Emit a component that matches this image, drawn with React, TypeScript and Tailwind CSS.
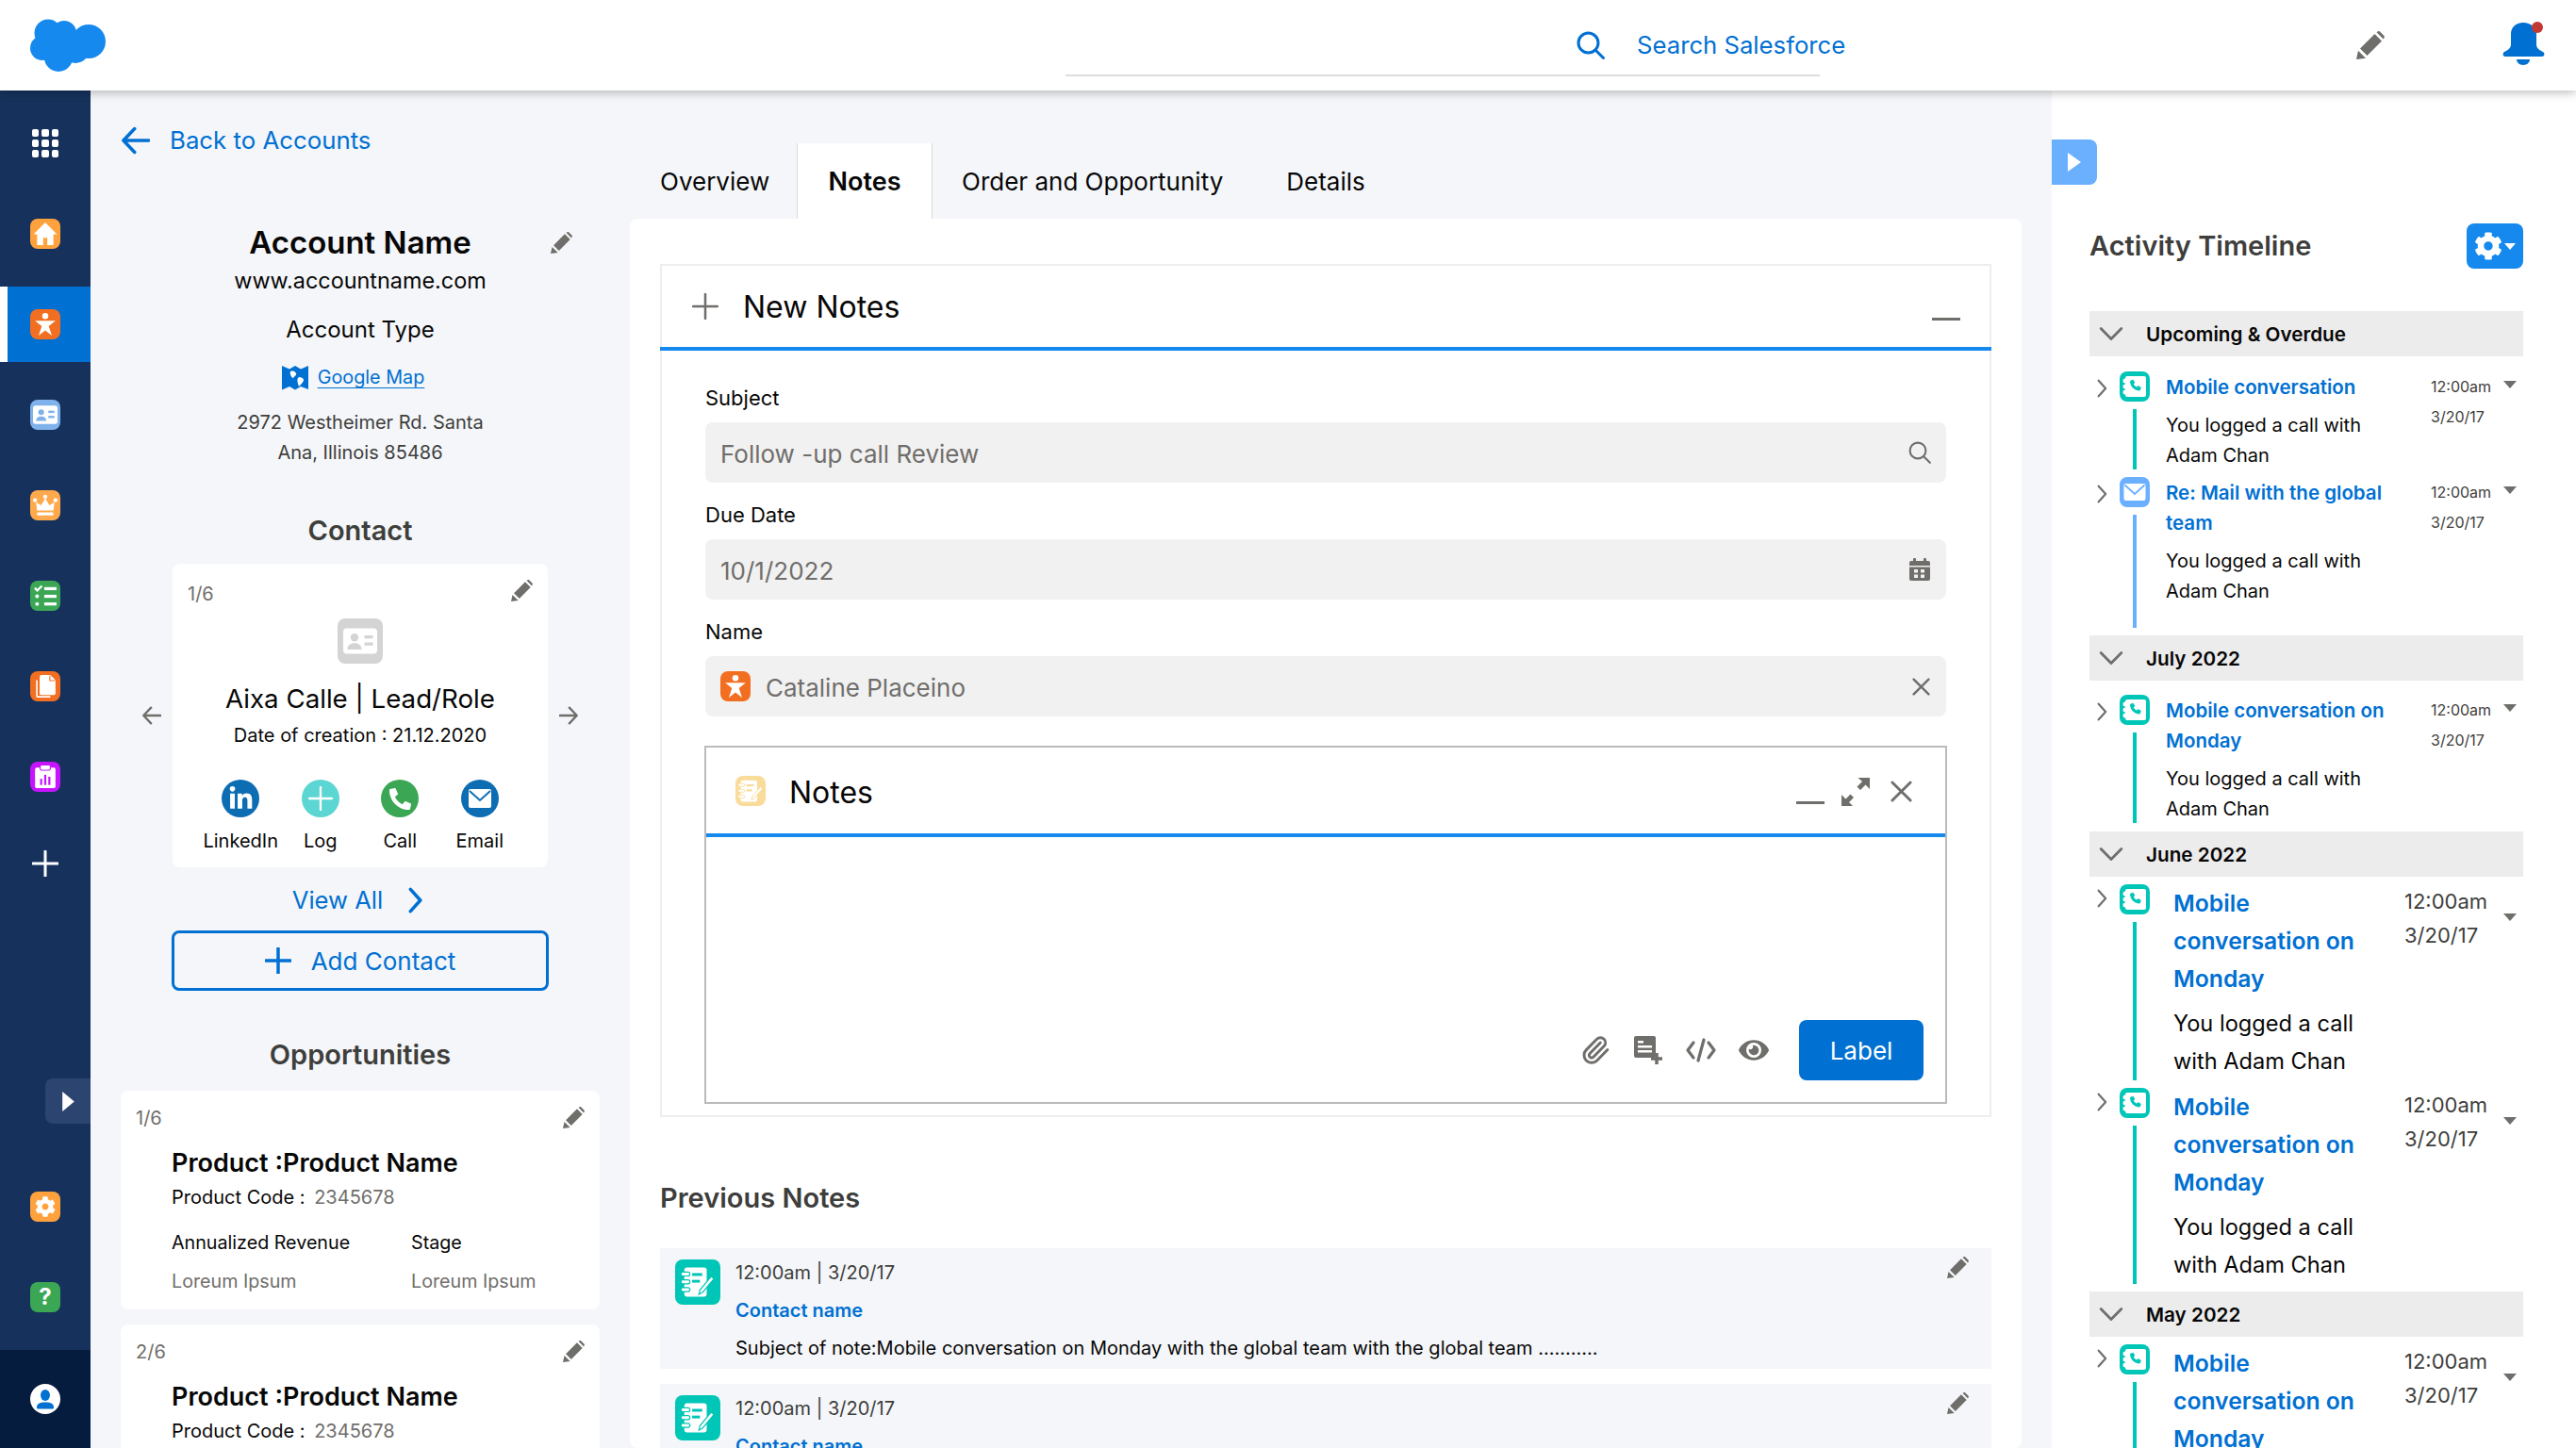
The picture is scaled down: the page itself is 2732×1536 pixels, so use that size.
import React from "react";
import { FaLinkedinIn, FaPhoneAlt, FaCog, FaEye } from "react-icons/fa";
import { Paperclip } from "lucide-react";

const GRAY = "#706e6b";

function Pencil({ size = 23, color = GRAY }: { size?: number; color?: string }) {
  return (
    <svg width={size} height={size} viewBox="0 0 24 24" fill={color} className="shrink-0">
      <path d="M0 24l1.6-7.4L8 23l-8 1zM3.2 14.8L15.6 2.4l6 6L9.2 20.8l-6-6zM17.2 0.9l1.2-0.7c.6-.3 1.3-.2 1.8.3l3.2 3.2c.5.5.6 1.2.3 1.8l-.7 1.2-5.8-5.8z" />
    </svg>
  );
}

function Logo() {
  return (
    <svg width="80" height="56" viewBox="0 0 80 56" fill="#1589ee">
      <circle cx="19" cy="15" r="14.5" />
      <circle cx="36" cy="15" r="13" />
      <circle cx="62" cy="24" r="18" />
      <circle cx="13" cy="31" r="13" />
      <circle cx="30" cy="41" r="15" />
      <circle cx="48" cy="32" r="15" />
      <circle cx="34" cy="26" r="18" />
    </svg>
  );
}

function Square({ bg, children, cls = "w-8 h-8" }: { bg: string; children: React.ReactNode; cls?: string }) {
  return (
    <div className={`${cls} rounded-lg flex items-center justify-center shrink-0`} style={{ background: bg }}>
      {children}
    </div>
  );
}

function PersonStar({ size = 26 }: { size?: number }) {
  return (
    <svg width={size} height={size} viewBox="0 0 24 24" fill="#fff">
      <circle cx="12" cy="4" r="3" />
      <path d="M2 8.5h20l-6.6 5.4L18.5 23 12 18l-6.5 5 3.1-9.1z" />
    </svg>
  );
}

function HomeGlyph() {
  return (
    <svg width="26" height="26" viewBox="0 0 24 24" fill="#fff">
      <path d="M12 1L0.5 12.5H4V23h6v-7h4v7h6V12.5h3.5z" />
    </svg>
  );
}

function CardGlyph({ color, size = 26 }: { color: string; size?: number }) {
  return (
    <svg width={size} height={size} viewBox="0 0 24 24">
      <rect x="0" y="3" width="24" height="18" rx="2.5" fill="#fff" />
      <circle cx="8" cy="9.5" r="2.8" fill={color} />
      <path d="M3 18c0-3 2-4.5 5-4.5s5 1.500 5 4.500z" fill={color} />
      <rect x="15" y="8" width="6" height="2.200" fill={color} />
      <rect x="15" y="13" width="6" height="2.200" fill={color} />
    </svg>
  );
}

function CrownGlyph() {
  return (
    <svg width="26" height="26" viewBox="0 0 24 24" fill="#fff">
      <circle cx="12" cy="3.500" r="2" />
      <circle cx="2" cy="7" r="2" />
      <circle cx="22" cy="7" r="2" />
      <path d="M3 9l5 3 4-7 4 7 5-3-1 8H4z" />
      <rect x="4" y="19" width="16" height="3" rx="1" />
    </svg>
  );
}

function TaskGlyph() {
  return (
    <svg width="26" height="26" viewBox="0 0 24 24" fill="#fff">
      <path d="M1 5l1.500-1.500 1.700 1.700L8 1.500 9.500 3 4.200 8.300z" />
      <rect x="11" y="3.500" width="12" height="3" />
      <rect x="11" y="11" width="12" height="3" />
      <rect x="11" y="18.500" width="12" height="3" />
      <circle cx="4" cy="12.500" r="1.800" />
      <circle cx="4" cy="20" r="1.800" />
    </svg>
  );
}

function FilesGlyph() {
  return (
    <svg width="26" height="26" viewBox="0 0 24 24" fill="#fff">
      <path d="M8 1h9l5 5v13a1.500 1.500 0 0 1-1.500 1.500H8A1.500 1.500 0 0 1 6.500 19V2.500A1.500 1.500 0 0 1 8 1z" />
      <path d="M3 6h1.500v15.500H17V23H4.500A1.500 1.500 0 0 1 3 21.500z" />
      <path d="M16.500 1.500v5h5" fill="none" stroke="#f26f21" strokeWidth="1" />
    </svg>
  );
}

function ClipGlyph() {
  return (
    <svg width="26" height="26" viewBox="0 0 24 24">
      <rect x="2" y="3" width="20" height="20" rx="1.500" fill="#fff" />
      <rect x="7" y="0.500" width="10" height="5" rx="1.500" fill="#fff" stroke="#c614ff" strokeWidth="1" />
      <rect x="7" y="14" width="2" height="6" fill="#c614ff" />
      <rect x="11" y="10" width="2" height="10" fill="#c614ff" />
      <rect x="15" y="12" width="2" height="8" fill="#c614ff" />
    </svg>
  );
}

function NoteGlyph({ color, size = 32 }: { color: string; size?: number }) {
  return (
    <svg width={size} height={size} viewBox="0 0 32 32">
      <rect x="4" y="3" width="20" height="26" rx="2.500" fill="#fff" />
      <rect x="1" y="7" width="8" height="3.500" rx="1.700" fill="#fff" stroke={color} strokeWidth="1" />
      <rect x="1" y="14" width="8" height="3.500" rx="1.700" fill="#fff" stroke={color} strokeWidth="1" />
      <rect x="1" y="21" width="8" height="3.500" rx="1.700" fill="#fff" stroke={color} strokeWidth="1" />
      <rect x="11" y="8" width="9" height="2.500" fill={color} />
      <rect x="11" y="14" width="7" height="2.500" fill={color} />
      <path d="M17 27l1-4 10-12 2.500 2-10 12z" fill="#fff" stroke={color} strokeWidth="1" />
    </svg>
  );
}

function CallIcon() {
  return (
    <div className="w-8 h-8 rounded-lg bg-[#00c6b7] flex items-center justify-center shrink-0">
      <svg width="32" height="32" viewBox="0 0 32 32">
        <rect x="6" y="5" width="22" height="22" rx="2" fill="#fff" />
        <circle cx="6" cy="10" r="2.500" fill="#fff" />
        <circle cx="6" cy="16" r="2.500" fill="#fff" />
        <circle cx="6" cy="22" r="2.500" fill="#fff" />
        <path
          d="M12 9.500l2.500-.8 1.800 3.200-1.500 1.300c.6 1.600 1.800 2.800 3.400 3.400l1.400-1.500 3.200 1.800-.8 2.500c-.3.700-1 1.100-1.700 1-5-.7-8.600-4.300-9.300-9.200-.1-.7.300-1.400 1-1.700z"
          fill="#00c6b7"
        />
      </svg>
    </div>
  );
}

function MailIcon() {
  return (
    <div className="w-8 h-8 rounded-lg bg-[#6bb0ff] flex items-center justify-center shrink-0">
      <svg width="24" height="20" viewBox="0 0 24 20">
        <rect x="0.500" y="1" width="23" height="18" rx="2" fill="#fff" />
        <path d="M1.500 2.500L12 12 22.500 2.500" fill="none" stroke="#6bb0ff" strokeWidth="1.800" />
      </svg>
    </div>
  );
}

function Chevron({ dir, size, color = GRAY, w = 2.600 }: { dir: "right" | "down"; size: number; color?: string; w?: number }) {
  return (
    <svg width={size} height={size} viewBox="0 0 24 24" fill="none" stroke={color} strokeWidth={w} strokeLinecap="round" strokeLinejoin="round" className="shrink-0">
      <path d={dir === "right" ? "M8 2l9 10-9 10" : "M2 7l10 10L22 7"} />
    </svg>
  );
}

function Caret({ w = 14, h = 8, color = GRAY }: { w?: number; h?: number; color?: string }) {
  return (
    <svg width={w} height={h} viewBox="0 0 14 8" className="shrink-0">
      <path d="M0 0h14L7 8z" fill={color} />
    </svg>
  );
}

function Arrow({ dir, size, color, w }: { dir: "l" | "r"; size: number; color: string; w: number }) {
  return (
    <svg width={size} height={size} viewBox="0 0 24 24" fill="none" stroke={color} strokeWidth={w} strokeLinecap="round" strokeLinejoin="round" className="shrink-0">
      <path d={dir === "l" ? "M23 12H2M11 2L1.500 12 11 22" : "M1 12h21M13 2l9.500 10L13 22"} />
    </svg>
  );
}

function Plus({ size, color, w = 2 }: { size: number; color: string; w?: number }) {
  return (
    <svg width={size} height={size} viewBox="0 0 28 28" fill="none" stroke={color} strokeWidth={w} strokeLinecap="round" className="shrink-0">
      <path d="M14 1v26M1 14h26" />
    </svg>
  );
}

function Cross({ size = 23 }: { size?: number }) {
  return (
    <svg width={size} height={size} viewBox="0 0 24 24" fill="none" stroke={GRAY} strokeWidth="3" strokeLinecap="round" className="shrink-0">
      <path d="M2 2l20 20M22 2L2 22" />
    </svg>
  );
}

function Search({ size, color, w }: { size: number; color: string; w: number }) {
  return (
    <svg width={size} height={size} viewBox="0 0 30 30" fill="none" stroke={color} strokeWidth={w} strokeLinecap="round" className="shrink-0">
      <circle cx="12.500" cy="12.500" r="10.500" />
      <path d="M20 20l8.500 8.500" />
    </svg>
  );
}

function SideItem({ children, active }: { children: React.ReactNode; active?: boolean }) {
  return (
    <div className="h-24 flex items-center justify-center">
      {active ? (
        <div className="h-20 w-full bg-[#0070d2] shadow-[inset_8px_0_0_#fff] flex items-center justify-center">{children}</div>
      ) : (
        children
      )}
    </div>
  );
}

function Sidebar() {
  return (
    <aside className="w-24 shrink-0 bg-[#16325c] flex flex-col pt-2">
      <SideItem>
        <div className="grid grid-cols-3 gap-[3px] w-7">
          {Array.from({ length: 9 }).map((_, i) => (
            <div key={i} className="h-2 bg-white rounded-[2px]" />
          ))}
        </div>
      </SideItem>
      <SideItem>
        <Square bg="#ffa23e"><HomeGlyph /></Square>
      </SideItem>
      <SideItem active>
        <Square bg="#f26f21"><PersonStar /></Square>
      </SideItem>
      <SideItem>
        <Square bg="#7fb2ea"><CardGlyph color="#7fb2ea" /></Square>
      </SideItem>
      <SideItem>
        <Square bg="#ffa94d"><CrownGlyph /></Square>
      </SideItem>
      <SideItem>
        <Square bg="#3ba755"><TaskGlyph /></Square>
      </SideItem>
      <SideItem>
        <Square bg="#f26f21"><FilesGlyph /></Square>
      </SideItem>
      <SideItem>
        <Square bg="#c614ff"><ClipGlyph /></Square>
      </SideItem>
      <div className="h-[88px] flex items-center justify-center">
        <Plus size={28} color="#fff" w={3} />
      </div>
      <div className="mt-[184px] self-end w-12 h-12 bg-[#2b4470] rounded-l-lg flex items-center justify-center">
        <svg width="13" height="21" viewBox="0 0 12 20"><path d="M0 0l12 10L0 20z" fill="#fff" /></svg>
      </div>
      <div className="mt-[72px] flex justify-center">
        <Square bg="#ffa23e"><FaCog size={22} color="#fff" /></Square>
      </div>
      <div className="mt-16 flex justify-center">
        <Square bg="#3ba755"><span className="text-white text-[24px] font-bold leading-none">?</span></Square>
      </div>
      <div className="mt-10 h-[104px] bg-[#061c3f] flex items-center justify-center">
        <div className="w-8 h-8 rounded-full bg-white flex items-center justify-center">
          <svg width="22" height="22" viewBox="0 0 22 22" fill="#0070d2">
            <ellipse cx="11" cy="7" rx="5" ry="6" />
            <path d="M2 20c0-4 3-5.500 9-5.500s9 1.500 9 5.500c0 1-.5 1.500-1.500 1.500h-15C2.500 21.500 2 21 2 20z" />
          </svg>
        </div>
      </div>
    </aside>
  );
}

function ContactAction({ bg, label, children }: { bg: string; label: string; children: React.ReactNode }) {
  return (
    <div className="flex flex-col items-center">
      <div className="w-10 h-10 rounded-full flex items-center justify-center" style={{ background: bg }}>{children}</div>
      <div className="mt-[11px] h-7 leading-7 text-[20px] text-[#080707]">{label}</div>
    </div>
  );
}

function OppCard({ n, extra }: { n: string; extra?: boolean }) {
  return (
    <div className={`w-[508px] bg-white rounded-lg shrink-0 px-4 pt-[17px] ${extra ? "h-[232px] mt-4" : "h-[232px] mt-[18px]"}`}>
      <div className="flex justify-between items-start h-[23px]">
        <span className="text-[20px] leading-6 text-[#706e6b]">{n}</span>
        <Pencil />
      </div>
      <div className="pl-[38px]">
        <div className="mt-[19px] h-9 leading-9 text-[27px] font-semibold text-[#080707]">Product :Product Name</div>
        <div className="mt-[2px] h-8 leading-8 text-[20px] text-[#080707]">
          Product Code : <span className="text-[#706e6b] ml-1">2345678</span>
        </div>
        <div className="mt-4 grid grid-cols-[254px_1fr] text-[19.7px]">
          <div className="h-8 leading-8 text-[#080707]">Annualized Revenue</div>
          <div className="h-8 leading-8 text-[#080707]">Stage</div>
          <div className="mt-[9px] h-8 leading-8 text-[#706e6b]">Loreum Ipsum</div>
          <div className="mt-[9px] h-8 leading-8 text-[#706e6b]">Loreum Ipsum</div>
        </div>
      </div>
    </div>
  );
}

function LeftColumn() {
  return (
    <section className="w-[572px] shrink-0 flex flex-col items-center overflow-hidden">
      <div className="self-start ml-[33px] mt-[37px] h-8 flex items-center">
        <Arrow dir="l" size={30} color="#0070d2" w={2.800} />
        <span className="ml-[21px] text-[25.8px] text-[#0070d2] leading-8">Back to Accounts</span>
      </div>
      <div className="mt-[72px] h-10 w-full grid grid-cols-[1fr_auto_1fr] items-center">
        <div />
        <div className="text-[33px] font-semibold text-[#080707] leading-10">Account Name</div>
        <div className="justify-self-end mr-[61px]"><Pencil /></div>
      </div>
      <div className="mt-[5px] h-8 leading-8 text-[23.4px] text-[#080707]">www.accountname.com</div>
      <div className="mt-5 h-8 leading-8 text-[24px] text-[#080707]">Account Type</div>
      <div className="mt-5 mr-4 h-8 flex items-center">
        <svg width="30" height="30" viewBox="0 0 30 30" className="shrink-0">
          <path d="M1 2l8 3.500L15 2l6 3.500L29 2v25l-8-3-6 3.500L9 24l-8 3.500z" fill="#0070d2" />
          <path d="M10 8c3-1 5 0 6 2s-2 3-3 5c-2 0-4-5-3-7zM19 14c2 0 5 1 5 3s-3 5-5 7c-1-3-3-8 0-10z" fill="#fff" />
        </svg>
        <span className="ml-[9px] text-[19.8px] text-[#0070d2] underline underline-offset-4">Google Map</span>
      </div>
      <div className="mt-4 text-center text-[20px] leading-8 text-[#3e3e3c]">
        2972 Westheimer Rd. Santa
        <br />
        Ana, Illinois 85486
      </div>
      <div className="mt-[47px] h-10 leading-10 text-[29px] font-semibold text-[#3e3e3c]">Contact</div>
      <div className="mt-[15px] flex items-center gap-[12px]">
        <Arrow dir="l" size={20} color={GRAY} w={2.800} />
        <div className="w-[398px] h-[322px] bg-white rounded-lg flex flex-col">
          <div className="flex justify-between items-start px-4 pt-[17px] h-10">
            <span className="text-[20px] leading-6 text-[#706e6b] pt-[3px]">1/6</span>
            <Pencil />
          </div>
          <div className="self-center mt-[18px] w-12 h-12 rounded-lg bg-[#d4d4d4] flex items-center justify-center">
            <CardGlyph color="#d4d4d4" size={36} />
          </div>
          <div className="mt-[17px] h-10 leading-10 text-center text-[27.7px] text-[#080707]">Aixa Calle | Lead/Role</div>
          <div className="mt-[3px] h-8 leading-8 text-center text-[20px] text-[#080707]">Date of creation : 21.12.2020</div>
          <div className="mt-[31px] px-[30px] grid grid-cols-4">
            <ContactAction bg="#0d6db2" label="LinkedIn"><FaLinkedinIn size={27} color="#fff" /></ContactAction>
            <ContactAction bg="#5bd6d2" label="Log"><Plus size={26} color="#fff" w={2.500} /></ContactAction>
            <ContactAction bg="#3ba755" label="Call"><FaPhoneAlt size={23} color="#fff" /></ContactAction>
            <ContactAction bg="#0d6db2" label="Email">
              <svg width="24" height="20" viewBox="0 0 24 20">
                <rect x="0" y="0" width="24" height="20" rx="2" fill="#fff" />
                <path d="M1 2l11 10L23 2" fill="none" stroke="#0d6db2" strokeWidth="2" />
              </svg>
            </ContactAction>
          </div>
        </div>
        <Arrow dir="r" size={20} color={GRAY} w={2.800} />
      </div>
      <div className="mt-4 h-10 flex items-center">
        <span className="text-[25.6px] text-[#0070d2]">View All</span>
        <span className="ml-[20px]"><Chevron dir="right" size={28} color="#0070d2" w={3} /></span>
      </div>
      <div className="mt-[13px] w-[400px] h-16 shrink-0 border-[3px] border-[#0070d2] rounded-lg flex items-center justify-center">
        <Plus size={28} color="#0070d2" w={3.500} />
        <span className="ml-[21px] text-[26px] text-[#0070d2]">Add Contact</span>
      </div>
      <div className="mt-12 h-10 leading-10 text-[29px] font-semibold text-[#3e3e3c] shrink-0">Opportunities</div>
      <OppCard n="1/6" />
      <OppCard n="2/6" extra />
    </section>
  );
}

function Field({ label, value, icon, first, leading }: { label: string; value: string; icon: React.ReactNode; first?: boolean; leading?: React.ReactNode }) {
  return (
    <>
      <div className={`${first ? "mt-[34px]" : "mt-[18px]"} h-8 leading-8 text-[22px] text-[#080707]`}>{label}</div>
      <div className="mt-[10px] h-16 rounded-lg bg-[#f1f1f1] flex items-center pl-4 pr-[16px]">
        {leading}
        <span className="text-[26px] text-[#706e6b] flex-1 pt-[2px]">{value}</span>
        {icon}
      </div>
    </>
  );
}

function NoteRow({ extra }: { extra?: boolean }) {
  return (
    <div className={`h-[128px] shrink-0 bg-[#f4f6f9] flex pl-4 pr-6 pt-3 ${extra ? "mt-4" : "mt-[33px]"}`}>
      <Square bg="#00c6b7" cls="w-12 h-12"><NoteGlyph color="#00c6b7" size={38} /></Square>
      <div className="ml-4 flex-1">
        <div className="h-7 leading-7 text-[20px] text-[#3e3e3c]">12:00am | 3/20/17</div>
        <div className="mt-[10px] h-8 leading-8 text-[20px] font-semibold text-[#0070d2]">Contact name</div>
        <div className="mt-2 h-8 leading-8 text-[20px] text-[#080707]">
          Subject of note:Mobile conversation on Monday with the global team with the global team ...........
        </div>
      </div>
      <div className="-mt-[3px]"><Pencil /></div>
    </div>
  );
}

function CenterColumn() {
  return (
    <section className="w-[1476px] shrink-0 flex flex-col pt-14">
      <div className="h-20 shrink-0 flex items-stretch text-[26px] text-[#080707]">
        <div className="ml-8 flex items-center w-[113px]">Overview</div>
        <div className="ml-8 w-[144px] bg-white border-x border-[#dddbda] flex items-center justify-center font-semibold text-[27px] pt-[2px]">Notes</div>
        <div className="ml-[31px] flex items-center whitespace-nowrap">Order and Opportunity</div>
        <div className="ml-[67px] flex items-center">Details</div>
      </div>
      <div className="flex-1 min-h-0 bg-white rounded-lg px-8 pt-12 flex flex-col overflow-hidden">
        <div className="h-[905px] shrink-0 border-2 border-[#eeeeee] flex flex-col">
          <div className="h-[90px] shrink-0 -mx-[2px] border-b-4 border-[#1589ee] flex items-center pl-[34px] pr-[33px]">
            <Plus size={28} color={GRAY} w={2.500} />
            <span className="ml-[26px] text-[32px] text-[#080707] flex-1 leading-10 pt-[1px]">New Notes</span>
            <div className="w-[30px] h-[3px] bg-[#706e6b] mt-[26px]" />
          </div>
          <div className="px-[46px] flex flex-col flex-1">
            <Field first label="Subject" value="Follow -up call Review" icon={<Search size={24} color={GRAY} w={2.600} />} />
            <Field
              label="Due Date"
              value="10/1/2022"
              icon={
                <svg width="22" height="24" viewBox="0 0 22 24" fill={GRAY} className="mx-[1px]">
                  <rect x="0" y="3" width="22" height="21" rx="2" />
                  <rect x="4" y="0" width="3" height="5" rx="1" />
                  <rect x="15" y="0" width="3" height="5" rx="1" />
                  <rect x="0" y="8" width="22" height="1.500" fill="#f1f1f1" />
                  <rect x="5" y="12" width="4" height="3.500" fill="#f1f1f1" />
                  <rect x="12" y="12" width="4" height="3.500" fill="#f1f1f1" />
                  <rect x="5" y="17.500" width="4" height="3.500" fill="#f1f1f1" />
                  <rect x="12" y="17.500" width="4" height="3.500" fill="#f1f1f1" />
                </svg>
              }
            />
            <Field
              label="Name"
              value="Cataline Placeino"
              icon={<span className="mr-[1px]"><Cross size={19} /></span>}
              leading={<div className="mr-[16px]"><Square bg="#f26f21"><PersonStar /></Square></div>}
            />
            <div className="mt-[31px] -mx-[1px] h-[380px] shrink-0 border-2 border-[#bbbbbb] flex flex-col">
              <div className="h-[95px] shrink-0 border-b-4 border-[#1589ee] flex items-center pl-[31px] pr-[35px]">
                <Square bg="#f9dc9a"><NoteGlyph color="#f9dc9a" size={28} /></Square>
                <span className="ml-[25px] text-[32px] text-[#080707] flex-1 leading-10 pt-1">Notes</span>
                <div className="w-[30px] h-[3px] bg-[#706e6b] mt-[26px]" />
                <svg width="30" height="30" viewBox="0 0 30 30" fill={GRAY} className="ml-[18px] mt-[2px]">
                  <path d="M0 30V18l4.500 4.500 5-5 3.500 3.500-5 5L12 30zM30 0v12l-4.500-4.500-5.500 5.500-3.500-3.500L22 4 17.500 0z" />
                </svg>
                <span className="ml-[22px] mt-[2px]"><Cross size={23} /></span>
              </div>
              <div className="flex-1 flex items-end justify-end pb-[23px] pr-[23px]">
                <div className="h-16 flex items-center">
                  <Paperclip size={32} color={GRAY} strokeWidth={2.200} />
                  <svg width="30" height="30" viewBox="0 0 30 30" className="ml-[25px]">
                    <rect x="0" y="0" width="23" height="23" rx="2" fill={GRAY} />
                    <rect x="4" y="5" width="6" height="2.500" fill="#fff" />
                    <rect x="4" y="10" width="15" height="2.500" fill="#fff" />
                    <rect x="4" y="15" width="15" height="2.500" fill="#fff" />
                    <path d="M24 18v12M18 24h12" stroke={GRAY} strokeWidth="3.500" />
                  </svg>
                  <svg width="32" height="26" viewBox="0 0 32 26" fill="none" stroke={GRAY} strokeWidth="3.200" strokeLinecap="round" strokeLinejoin="round" className="ml-[25px]">
                    <path d="M8 5L2 13l6 8M24 5l6 8-6 8M19 2l-6 22" />
                  </svg>
                  <span className="ml-[24px]"><FaEye size={32} color={GRAY} /></span>
                  <button className="ml-[32px] w-[132px] h-16 rounded-lg bg-[#0070d2] text-white text-[26px]">Label</button>
                </div>
              </div>
            </div>
          </div>
        </div>
        <div className="mt-[66px] h-10 leading-10 shrink-0 text-[29px] font-semibold text-[#3e3e3c]">Previous Notes</div>
        <NoteRow />
        <NoteRow extra />
      </div>
    </section>
  );
}

function SectionBar({ title }: { title: string }) {
  return (
    <div className="h-12 bg-[#ececec] flex items-center pl-[10px] shrink-0">
      <Chevron dir="down" size={26} />
      <span className="ml-[24px] text-[20.7px] font-semibold text-[#080707] pt-[2px]">{title}</span>
    </div>
  );
}

type ItemProps = { large?: boolean; mail?: boolean; title: string[]; body: string[]; h: number };

function Item({ large, mail, title, body, h }: ItemProps) {
  return (
    <div className="flex items-stretch shrink-0" style={{ height: h }}>
      <div className={`w-[32px] pl-[3px] ${large ? "pt-[5px]" : "pt-[8px]"}`}>
        <Chevron dir="right" size={20} />
      </div>
      <div className="w-8 flex flex-col items-center shrink-0">
        {mail ? <MailIcon /> : <CallIcon />}
        <div className={`mt-2 w-1 flex-1 ${mail ? "bg-[#6bb0ff]" : "bg-[#00c6b7]"}`} />
      </div>
      <div className={`${large ? "ml-[25px] w-[245px]" : "ml-[17px] w-[281px] pt-[1px]"}`}>
        {title.map((t) => (
          <div key={t} className={`${large ? "text-[24.7px] leading-10" : "text-[20.5px] leading-8"} font-semibold text-[#0070d2] whitespace-nowrap`}>{t}</div>
        ))}
        <div className="mt-2">
          {body.map((t) => (
            <div key={t} className={`${large ? "text-[23.6px] leading-10" : "text-[20px] leading-8"} text-[#080707] whitespace-nowrap`}>{t}</div>
          ))}
        </div>
      </div>
      <div className={`${large ? "w-[105px] text-[22px] leading-9" : "w-[77px] text-[16px] leading-8"} text-[#3e3e3c]`}>
        <div>12:00am</div>
        <div>3/20/17</div>
      </div>
      <div className={large ? "pt-[31px]" : "pt-[10px]"}><Caret /></div>
    </div>
  );
}

function RightColumn() {
  const call1 = ["You logged a call with", "Adam Chan"];
  const call2 = ["You logged a call", "with Adam Chan"];
  const big = ["Mobile", "conversation on", "Monday"];
  return (
    <section className="ml-8 flex-1 bg-white pl-10 pr-14 flex flex-col overflow-hidden">
      <div className="-ml-10 mt-[52px] w-12 h-12 shrink-0 rounded-r-lg bg-[#6bb0ff] flex items-center justify-center">
        <svg width="14" height="20" viewBox="0 0 14 20"><path d="M0 0l14 10L0 20z" fill="#fff" /></svg>
      </div>
      <div className="mt-[41px] h-12 shrink-0 flex items-center justify-between">
        <span className="text-[29px] font-semibold text-[#3e3e3c]">Activity Timeline</span>
        <div className="w-[60px] h-12 rounded-lg bg-[#1589ee] flex items-center justify-center gap-[2px]">
          <FaCog size={30} color="#fff" />
          <Caret w={12} h={7} color="#fff" />
        </div>
      </div>
      <div className="mt-[45px] flex flex-col">
        <SectionBar title="Upcoming &amp; Overdue" />
        <div className="mt-4"><Item title={["Mobile conversation"]} body={call1} h={104} /></div>
        <div className="mt-2"><Item mail title={["Re: Mail with the global", "team"]} body={call1} h={160} /></div>
        <div className="mt-2"><SectionBar title="July 2022" /></div>
        <div className="mt-[15px]"><Item title={["Mobile conversation on", "Monday"]} body={call1} h={136} /></div>
        <div className="mt-[9px]"><SectionBar title="June 2022" /></div>
        <div className="mt-2"><Item large title={big} body={call2} h={208} /></div>
        <div className="mt-2"><Item large title={big} body={call2} h={208} /></div>
        <div className="mt-2"><SectionBar title="May 2022" /></div>
        <div className="mt-2"><Item large title={big} body={call2} h={208} /></div>
      </div>
    </section>
  );
}

export default function App() {
  return (
    <div className="w-[2732px] h-[1536px] overflow-hidden bg-[#f4f6f9] flex flex-col font-['Inter',sans-serif]">
      <header className="h-24 shrink-0 bg-white relative z-10 shadow-[0_2px_10px_rgba(0,0,0,0.28)] flex items-center">
        <div className="ml-8 shrink-0"><Logo /></div>
        <div className="ml-[1018px] w-[800px] h-[50px] border-b-2 border-[#dddddd] self-start mt-[31px]" />
        <div className="-ml-[258px] flex items-center self-start mt-[33px] h-[30px]">
          <Search size={30} color="#0070d2" w={3} />
          <span className="ml-[34px] text-[25.7px] text-[#0070d2] whitespace-nowrap pt-[1px]">Search Salesforce</span>
        </div>
        <div className="ml-[542px]"><Pencil size={30} /></div>
        <div className="ml-[125px] mb-1">
          <svg width="45" height="46" viewBox="0 0 45 46">
            <path d="M22 1c-8 0-13 5-13 12v11c0 4-3 6-7 8-2 1-2 5 1 5h39c3 0 3-4 1-5-4-2-7-4-7-8V13c0-7-6-12-14-12z" fill="#0070d2" />
            <path d="M15 40h14c0 3-3 6-7 6s-7-3-7-6z" fill="#0070d2" />
            <circle cx="37" cy="6" r="6" fill="#c23934" />
          </svg>
        </div>
      </header>
      <main className="flex flex-1 min-h-0">
        <Sidebar />
        <LeftColumn />
        <CenterColumn />
        <RightColumn />
      </main>
    </div>
  );
}
